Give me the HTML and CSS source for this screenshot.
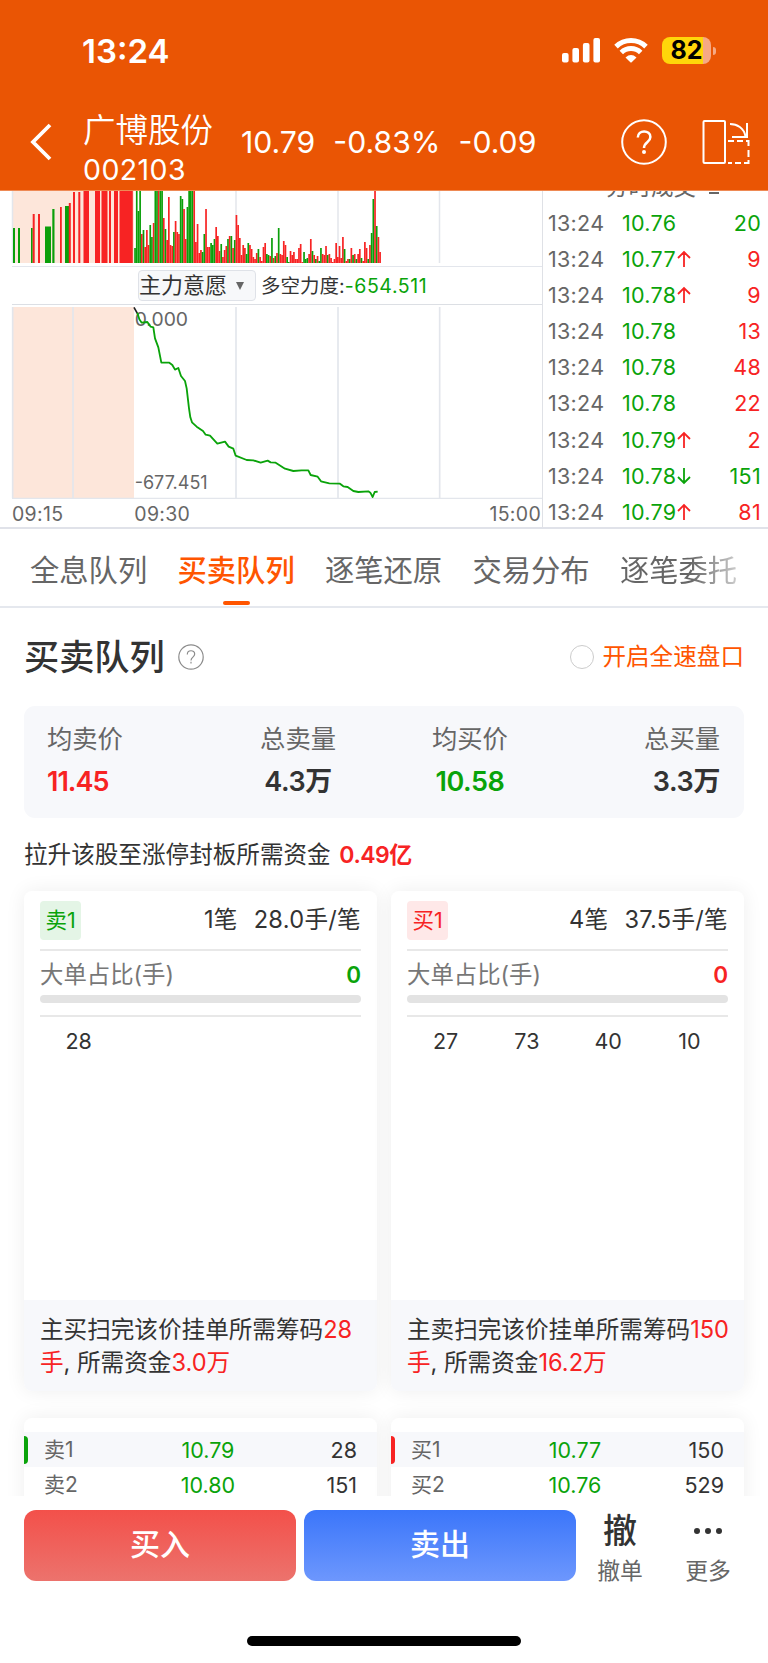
FILE: index.html
```html
<!DOCTYPE html>
<html lang="zh-CN">
<head>
    <meta charset="UTF-8">
    <meta name="viewport" content="width=device-width, initial-scale=1.0">
    <title>广博股份 002103</title>
    <link rel="stylesheet" href="styles.css">
</head>
<body>
    <header class="header">
        <div class="status-bar">
            <span class="clock">13:24</span>
            <div class="status-icons">
                <svg width="39" height="25" viewBox="0 0 39 25" fill="#fff">
                    <rect x="0" y="15" width="6.6" height="9.5" rx="2"/>
                    <rect x="10.4" y="10" width="6.6" height="14.5" rx="2"/>
                    <rect x="20.9" y="5" width="6.6" height="19.5" rx="2"/>
                    <rect x="31.4" y="0" width="6.6" height="24.5" rx="2"/>
                </svg>
                <svg class="wifi" width="34" height="25" viewBox="0 0 34 25" fill="none" stroke="#fff" stroke-width="5">
                    <path d="M2 8.6a21.6 21.6 0 0 1 30 0"/>
                    <path d="M7.3 14.5a14 14 0 0 1 19.4 0"/>
                    <path d="M11.5 19.4Q17 14.6 22.5 19.4L17.7 24.2q-.7.6-1.4 0z" fill="#fff" stroke="none"/>
                </svg>
                <div class="battery"><span>82</span></div>
                <i class="battery-cap"></i>
            </div>
        </div>
        <nav class="nav-bar">
            <svg class="back" width="22" height="38" viewBox="0 0 22 38" fill="none" stroke="#fff" stroke-width="3.8">
                <path d="M20 2 3 19l17 17"/>
            </svg>
            <div class="stock">
                <div class="stock-name">广博股份</div>
                <div class="stock-code">002103</div>
            </div>
            <div class="quote">
                <span>10.79</span>
                <span>-0.83%</span>
                <span>-0.09</span>
            </div>
            <svg class="help" width="46" height="46" viewBox="0 0 46 46" fill="none" stroke="#fff" stroke-width="2">
                <circle cx="23" cy="23" r="21.8"/>
                <path d="M16.8 18.5c0-8 12.6-8 12.6-.6 0 5.5-6.4 5.2-6.4 11" stroke-width="2.5"/>
                <circle cx="23" cy="33" r="2" fill="#fff" stroke="none"/>
            </svg>
            <svg class="rotate" width="48" height="46" viewBox="0 0 48 46" fill="none" stroke="#fff" stroke-width="2">
                <rect x="1.5" y="2" width="21.5" height="42" rx="1"/>
                <path d="M28 5c7 0 14 4 15.500 12.500M45 4v14H30"/>
                <path d="M26 22h6m3 0h6m3 0h2.500v5m0 4v7m0 3v3H42m-3 0h-6m-3 0h-4"/>
            </svg>
        </nav>
    </header>

    <section class="market">
        <div class="charts">
            <svg id="volume" class="volume" width="542" height="75" viewBox="0 0 542 75">
                <rect x="12" y="0" width="122" height="72" fill="#fde6da"/>
                <path d="M12.500 0V72M236 0V72M338 0V72M439.500 0V72" stroke="#e3e6ec" stroke-width="1.5"/>
            </svg>
            <div class="indicator">
                <div class="select">主力意愿<i></i></div>
                <span class="power">多空力度:<b>-654.511</b></span>
            </div>
            <svg class="trend" width="542" height="194" viewBox="0 135 1626 582">
                <rect x="36" y="141" width="366" height="573" fill="#fde6da"/>
                <path d="M38 141V714M219 141V714M708 141V714M1014 141V714M1319 141V714" stroke="#e3e6ec" stroke-width="5"/>
                <path d="M36 715H1626" stroke="#e3e6ec" stroke-width="4"/>
                <text x="404" y="197" class="label">0.000</text>
                <text x="404" y="688" class="label label-min">-677.451</text>
                <path d="M402 142l10 18" fill="none" stroke="#222" stroke-width="5"/>
                <path d="M412 158L418 178L425 188L442 186L452 200L460 202L465 235L475 262L484 308L508 308L517 315L525 329L535 324L543 348L555 363L560 385L567 445L571 472L576 487L590 500L609 513L617 524L630 527L652 551L675 545L686 560L700 566L707 587L740 600L760 601L782 608L803 602L812 607L827 608L855 626L880 633L905 631L925 631L932 645L953 650L963 664L988 670L1020 671L1030 679L1043 681L1060 693L1075 696L1105 694L1111 698L1118 711L1124 696L1133 695" fill="none" stroke="#0aa30a" stroke-width="5.500" stroke-linejoin="round"/>
            </svg>
            <div class="axis">
                <span>09:15</span>
                <span class="open">09:30</span>
                <span class="close">15:00</span>
            </div>
        </div>
        <div class="trades">
            <div class="trades-title">分时成交<i></i></div>
            <div class="trade"><span class="time">13:24</span><span class="price">10.76</span><span class="green">20</span></div>
            <div class="trade"><span class="time">13:24</span><span class="price">10.77<svg class="up" viewBox="0 0 14 18"><path d="M7 17V2M1 8l6-6 6 6"/></svg></span><span class="red">9</span></div>
            <div class="trade"><span class="time">13:24</span><span class="price">10.78<svg class="up" viewBox="0 0 14 18"><path d="M7 17V2M1 8l6-6 6 6"/></svg></span><span class="red">9</span></div>
            <div class="trade"><span class="time">13:24</span><span class="price">10.78</span><span class="red">13</span></div>
            <div class="trade"><span class="time">13:24</span><span class="price">10.78</span><span class="red">48</span></div>
            <div class="trade"><span class="time">13:24</span><span class="price">10.78</span><span class="red">22</span></div>
            <div class="trade"><span class="time">13:24</span><span class="price">10.79<svg class="up" viewBox="0 0 14 18"><path d="M7 17V2M1 8l6-6 6 6"/></svg></span><span class="red">2</span></div>
            <div class="trade"><span class="time">13:24</span><span class="price">10.78<svg class="down" viewBox="0 0 14 18"><path d="M7 1v15M1 10l6 6 6-6"/></svg></span><span class="green">151</span></div>
            <div class="trade"><span class="time">13:24</span><span class="price">10.79<svg class="up" viewBox="0 0 14 18"><path d="M7 17V2M1 8l6-6 6 6"/></svg></span><span class="red">81</span></div>
        </div>
    </section>

    <div class="tabs">
        <span>全息队列</span>
        <span class="active">买卖队列</span>
        <span>逐笔还原</span>
        <span>交易分布</span>
        <span class="fade">逐笔委托</span>
    </div>

    <main class="content">
        <div class="heading">
            <h1>买卖队列</h1>
            <svg width="26" height="26" viewBox="0 0 26 26" fill="none" stroke="#8c8c8c" stroke-width="1.2">
                <circle cx="13" cy="13" r="12.2"/>
                <path d="M9.300 10.400c0-4.800 7.400-4.800 7.400-.4 0 3.200-3.700 3-3.700 6.500M13 17.800v1.800"/>
            </svg>
            <label class="speed"><i></i>开启全速盘口</label>
        </div>

        <div class="summary">
            <div class="half">
                <div class="stat first"><span>均卖价</span><b class="red">11.45</b></div>
                <div class="stat"><span>总卖量</span><b>4.3万</b></div>
            </div>
            <div class="half">
                <div class="stat"><span>均买价</span><b class="green">10.58</b></div>
                <div class="stat last"><span>总买量</span><b>3.3万</b></div>
            </div>
        </div>

        <p class="limit">拉升该股至涨停封板所需资金 <b class="red">0.49亿</b></p>

        <div class="columns">
            <div class="card queue">
                <div class="queue-top">
                    <span class="tag sell">卖1</span>
                    <span class="count">1笔</span><span>28.0手/笔</span>
                </div>
                <div class="ratio"><span>大单占比(手)</span><b class="green">0</b></div>
                <div class="bar"></div>
                <div class="divider"></div>
                <div class="orders"><span>28</span></div>
                <p class="note">主买扫完该价挂单所需筹码<span class="red">28手</span>, 所需资金<span class="red">3.0万</span></p>
            </div>
            <div class="card queue">
                <div class="queue-top">
                    <span class="tag buy">买1</span>
                    <span class="count">4笔</span><span>37.5手/笔</span>
                </div>
                <div class="ratio"><span>大单占比(手)</span><b class="red">0</b></div>
                <div class="bar"></div>
                <div class="divider"></div>
                <div class="orders"><span>27</span><span>73</span><span>40</span><span>10</span></div>
                <p class="note">主卖扫完该价挂单所需筹码<span class="red">150手</span>, 所需资金<span class="red">16.2万</span></p>
            </div>
        </div>

        <div class="columns levels">
            <div class="card">
                <div class="level current sell-mark"><span>卖1</span><span class="green">10.79</span><span>28</span></div>
                <div class="level"><span>卖2</span><span class="green">10.80</span><span>151</span></div>
            </div>
            <div class="card">
                <div class="level current buy-mark"><span>买1</span><span class="green">10.77</span><span>150</span></div>
                <div class="level"><span>买2</span><span class="green">10.76</span><span>529</span></div>
            </div>
        </div>
    </main>

    <footer class="footer">
        <div class="actions">
            <button class="btn-buy">买入</button>
            <button class="btn-sell">卖出</button>
            <div class="action cancel"><span class="icon">撤</span><span>撤单</span></div>
            <div class="action more">
                <span class="icon"><svg width="30" height="8" viewBox="0 0 30 8" fill="#333"><circle cx="4" cy="4" r="3"/><circle cx="15" cy="4" r="3"/><circle cx="26" cy="4" r="3"/></svg></span>
                <span>更多</span>
            </div>
        </div>
        <div class="home-indicator"></div>
    </footer>

    <script>
        const RED = '#f72323';
        const GREEN = '#0a9f0a';
        const BASE = 72;
        const chart = document.getElementById('volume');

        function bar(x, width, height, color) {
            const rect = document.createElementNS('http://www.w3.org/2000/svg', 'rect');
            rect.setAttribute('x', x);
            rect.setAttribute('y', BASE - height);
            rect.setAttribute('width', width);
            rect.setAttribute('height', height);
            rect.setAttribute('fill', color);
            chart.appendChild(rect);
        }

        // call auction: x, width, height (negative = green)
        const auction = [
            [13, 2, -35], [18, 2, -35], [31, 1.7, -35], [32.7, 2, 49], [38, 2, 49],
            [45, 6, -36.5], [52.3, 2.2, -54], [60, 1.8, 56], [65, 4, -57], [68.8, 2, 60],
            [73, 2, 71], [78.3, 2, 71], [83.5, 5.5, 72], [95, 5, 72], [101.5, 6, 72],
            [109, 2, 72], [114, 4, 72], [119.5, 13.3, 72]
        ];
        auction.forEach(([x, w, v]) => bar(x, w, Math.abs(v), v > 0 ? RED : GREEN));

        // one bar per minute from 09:30
        const minutes = [
            -15, -72, -52, -72, 29, -33, 16, 33, 18, -38, -26, 40, -72, -72, 72, -72, -72, 45, -34, 23,
            66, 18, 17, -31, 42, 31, 29, -67, -64, 54, 24, -56, -72, -72, -72, 72, 21, 39, 10, 13,
            -11, -29, 54, 16, 16, -20, -18, -24, 36, 27, 12, -19, 6, 13, 17, -24, 27, -27, 15, -23,
            48, 38, 25, 8, 18, 15, -9, -20, 18, 14, 6, 4, 10, -14, 6, 2, 16, 20, -9, -8,
            7, -25, 5, -7, 10, -35, 9, 8, 22, 18, -6, -1, 12, 8, 11, 4, 4, 15, 19, 1,
            -11, -4, -5, 9, 24, -12, 8, -4, 7, -2, -15, 9, 8, 17, -8, 9, 5, 1, 4, 20,
            6, 17, 5, 26, -14, 2, 4, -4, 15, -8, 9, -4, 9, 14, -5, 2, 21, 15, -4, 18,
            -30, -64, 72, -37, 26, 11
        ];
        minutes.forEach((v, i) => bar(134.2 + i * 1.69, 1.69, Math.abs(v), v > 0 ? RED : GREEN));
    </script>
</body>
</html>
```
FILE: styles.css
```css
* {
    box-sizing: border-box;
}
body {
    margin: 0;
    width: 768px;
    height: 1663px;
    overflow: hidden;
    display: flex;
    flex-direction: column;
    background-color: #fff;
    color: #333;
    font-family: 'Inter', 'Noto Sans CJK SC', sans-serif;
}
h1, p {
    margin: 0;
}
b {
    font-weight: 500;
}
.red {
    color: #f72323;
}
.green {
    color: #0aa30a;
}

/* header */
.header {
    height: 191px;
    flex-shrink: 0;
    background-color: #ea5504;
    color: #fff;
    border-bottom: 1px solid #ee8a55;
}
.status-bar {
    display: flex;
    justify-content: space-between;
    height: 90px;
    padding: 36px 52px 0 82px;
}
.clock {
    font-size: 33px;
    font-weight: 600;
    line-height: 31px;
}
.status-icons {
    display: flex;
    height: 29px;
    align-items: center;
}
.wifi {
    margin: 0 14px 0 13px;
}
.battery {
    width: 49px;
    height: 27px;
    border-radius: 8px;
    background: linear-gradient(90deg, #ffd60a 83%, #f6a984 83%);
    color: #000;
    font-size: 25px;
    font-weight: 700;
    line-height: 27px;
    text-align: center;
}
.battery-cap {
    width: 3px;
    height: 8px;
    margin-left: 2px;
    border-radius: 0 4px 4px 0;
    background-color: #f6a984;
}
.nav-bar {
    display: flex;
    align-items: center;
    height: 100px;
    padding: 3px 18px 0 30px;
}
.stock {
    width: 158px;
    margin-left: 31px;
    padding-top: 14px;
}
.stock-name {
    font-size: 32.5px;
    line-height: 42px;
    font-weight: 350;
}
.stock-code {
    font-size: 28.5px;
    line-height: 35px;
    letter-spacing: 0.4px;
}
.quote {
    display: flex;
    flex: 1;
    gap: 18px;
    font-size: 30.2px;
    line-height: 40px;
}
.rotate {
    margin-left: 35px;
}

/* charts and trades */
.market {
    display: flex;
    height: 338px;
    flex-shrink: 0;
    border-bottom: 2px solid #e0e2e9;
}
.charts {
    display: flex;
    flex-direction: column;
    width: 543px;
    flex-shrink: 0;
    border-right: 1px solid #dfe1e6;
}
.charts svg {
    flex-shrink: 0;
}
.indicator {
    display: flex;
    align-items: center;
    height: 39px;
    flex-shrink: 0;
    margin-left: 12px;
    padding-left: 126px;
    border-top: 1px solid #e3e6ec;
    border-bottom: 1px solid #dcdfe4;
}
.select {
    display: flex;
    align-items: center;
    width: 118px;
    height: 31px;
    border: 1px solid #dfe2e8;
    border-radius: 4px;
    background-color: #f7f8fa;
    font-size: 22px;
    line-height: 29px;
}
.select i {
    margin-left: 9px;
    border: 4.5px solid transparent;
    border-top: 8px solid #666;
    border-bottom: 0;
}
.power {
    margin-left: 5px;
    font-size: 19.5px;
    line-height: 30px;
}
.power b {
    font-weight: 400;
    letter-spacing: 0.6px;
    color: #0aa30a;
}
.label {
    font-size: 58px;
    fill: #666;
}
.label-min {
    font-size: 54px;
}
.axis {
    display: flex;
    padding: 0 1px 0 12px;
    font-size: 19.5px;
    letter-spacing: 0.3px;
    line-height: 30px;
    color: #666;
}
.open {
    margin-left: 71px;
}
.close {
    margin-left: auto;
}
.trades {
    flex: 1;
    overflow: hidden;
    padding: 0 7px 0 5px;
}
.trades-title {
    display: flex;
    align-items: center;
    justify-content: center;
    height: 36px;
    margin: -22px 0 0 16px;
    font-size: 22.5px;
    line-height: 36px;
    color: #666;
}
.trades-title i {
    width: 10px;
    height: 9px;
    margin: 5px 0 0 13px;
    border-top: 2px solid #666;
    border-bottom: 2px solid #666;
}
.trade {
    display: flex;
    height: 36.1px;
    line-height: 36px;
    font-size: 21.5px;
    letter-spacing: 0.3px;
}
.time {
    width: 74px;
    color: #666;
}
.price {
    flex: 1;
    color: #0aa30a;
}
.price svg {
    width: 14px;
    height: 18px;
    margin-left: 1px;
    vertical-align: -1px;
    fill: none;
    stroke-width: 1.8;
}
.up {
    stroke: #f72323;
}
.down {
    stroke: #0aa30a;
}

/* tabs */
.tabs {
    display: flex;
    gap: 30.3px;
    height: 79px;
    flex-shrink: 0;
    padding-left: 30px;
    border-bottom: 2px solid #e5e8ee;
    font-size: 29.3px;
    line-height: 83px;
    color: #666;
    white-space: nowrap;
}
.active {
    display: flex;
    flex-direction: column;
    align-items: center;
    color: #ff5500;
    font-weight: 500;
}
.active::after {
    content: "";
    width: 27px;
    height: 4px;
    margin-top: -11px;
    border-radius: 2px;
    background-color: #ff5500;
}
.fade {
    color: transparent;
    background: linear-gradient(90deg, #666 60%, #ccc 100%);
    background-clip: text;
    -webkit-background-clip: text;
}

/* queue */
.content {
    flex: 1;
    overflow: hidden;
    padding: 0 24px;
}
.heading {
    display: flex;
    align-items: center;
    height: 98px;
}
.heading h1 {
    margin-right: 13px;
    font-size: 35.2px;
    line-height: 40px;
    font-weight: 500;
}
.speed {
    display: flex;
    align-items: center;
    margin-left: auto;
    font-size: 23.6px;
    line-height: 30px;
    color: #ff5500;
}
.speed i {
    width: 24px;
    height: 24px;
    margin-right: 8px;
    border: 1.5px solid #ccc;
    border-radius: 50%;
}
.summary {
    display: flex;
    justify-content: space-between;
    height: 112px;
    padding: 12px 24px 0;
    border-radius: 11px;
    background-color: #f7f8fb;
}
.half {
    display: flex;
    justify-content: space-between;
    width: 288px;
}
.stat {
    display: flex;
    flex-direction: column;
    align-items: center;
    font-size: 25.3px;
    line-height: 42.5px;
    color: #666;
}
.stat b {
    font-size: 27px;
    font-weight: 600;
    letter-spacing: -0.4px;
}
.stat b:not([class]) {
    color: #333;
}
.first {
    align-items: flex-start;
    margin-left: -1px;
}
.first b {
    letter-spacing: -1px;
}
.last {
    align-items: flex-end;
}
.limit {
    height: 73px;
    font-size: 23.6px;
    line-height: 74px;
}
.limit b {
    margin-left: 2px;
    font-size: 23px;
    font-weight: 600;
    letter-spacing: -0.5px;
}
.columns {
    display: grid;
    grid-template-columns: 1fr 1fr;
    gap: 14px;
}
.card {
    overflow: hidden;
    border-radius: 8px;
    background-color: #fff;
    box-shadow: 0 0 20px rgba(0, 0, 0, 0.07);
}
.queue {
    display: flex;
    flex-direction: column;
    height: 500px;
    padding: 0 16px;
}
.queue-top {
    display: flex;
    align-items: center;
    height: 60px;
    border-bottom: 2px solid #e8e8e8;
    font-size: 23.6px;
    line-height: 38px;
    letter-spacing: 0.3px;
}
.tag {
    width: 41px;
    height: 39px;
    border-radius: 4px;
    font-size: 21.5px;
    line-height: 39px;
    letter-spacing: 0;
    text-align: center;
}
.sell {
    background-color: #e4f5e6;
    color: #0aa30a;
}
.buy {
    background-color: #fee8e8;
    color: #f72323;
}
.count {
    margin: 0 16px 0 auto;
}
.ratio {
    display: flex;
    justify-content: space-between;
    height: 44px;
    font-size: 23.4px;
    line-height: 48px;
    color: #777;
}
.ratio b {
    font-size: 22.5px;
    font-weight: 600;
}
.bar {
    height: 8px;
    flex-shrink: 0;
    border-radius: 4px;
    background-color: #e3e3e3;
}
.divider {
    height: 2px;
    margin-top: 12px;
    background-color: #e8e8e8;
}
.orders {
    display: grid;
    grid-template-columns: repeat(4, 1fr);
    margin: 0 -2px;
    font-size: 21.5px;
    line-height: 49px;
    text-align: center;
}
.note {
    height: 91px;
    margin: auto -16px 0;
    padding: 13px 12px 0 16px;
    background-color: #f7f8fb;
    font-size: 23.6px;
    line-height: 33px;
}
.levels {
    margin-top: 27px;
}
.levels .card {
    height: 120px;
    padding-top: 14px;
}
.level {
    display: grid;
    grid-template-columns: 120px 88px 1fr;
    height: 35px;
    padding: 0 20px;
    font-size: 21.5px;
    line-height: 36px;
    text-align: center;
}
.level span:first-child {
    text-align: left;
    font-size: 21px;
    color: #666;
}
.level span:last-child {
    text-align: right;
}
.current {
    position: relative;
    background-color: #f7f8fb;
}
.current::before {
    content: "";
    position: absolute;
    left: 0;
    top: 4px;
    width: 4px;
    height: 28px;
    border-radius: 0 4px 4px 0;
}
.sell-mark::before {
    background-color: #0aa30a;
}
.buy-mark::before {
    background-color: #f72323;
}

/* bottom actions */
.footer {
    height: 167px;
    flex-shrink: 0;
    padding-top: 14px;
    background-color: #fff;
}
.actions {
    display: flex;
    gap: 8px;
    height: 71px;
    padding-left: 24px;
}
button {
    width: 272px;
    padding: 0 0 3px;
    border: none;
    border-radius: 12px;
    color: #fff;
    font-family: inherit;
    font-size: 30px;
    font-weight: 500;
    line-height: 40px;
}
.btn-buy {
    background: linear-gradient(#f3504a, #ec736d);
}
.btn-sell {
    background: linear-gradient(#3b76fa, #6d97fd);
}
.action {
    display: flex;
    flex-direction: column;
    align-items: center;
    width: 80px;
    font-size: 22.8px;
    line-height: 38px;
    color: #666;
}
.icon {
    display: flex;
    align-items: center;
    height: 42px;
    flex-shrink: 0;
    font-size: 34px;
    line-height: 42px;
    font-weight: 500;
    color: #333;
}
.cancel {
    margin-left: -4px;
}
.home-indicator {
    width: 274px;
    height: 10px;
    margin: 55px auto 0;
    border-radius: 5px;
    background-color: #000;
}
```
